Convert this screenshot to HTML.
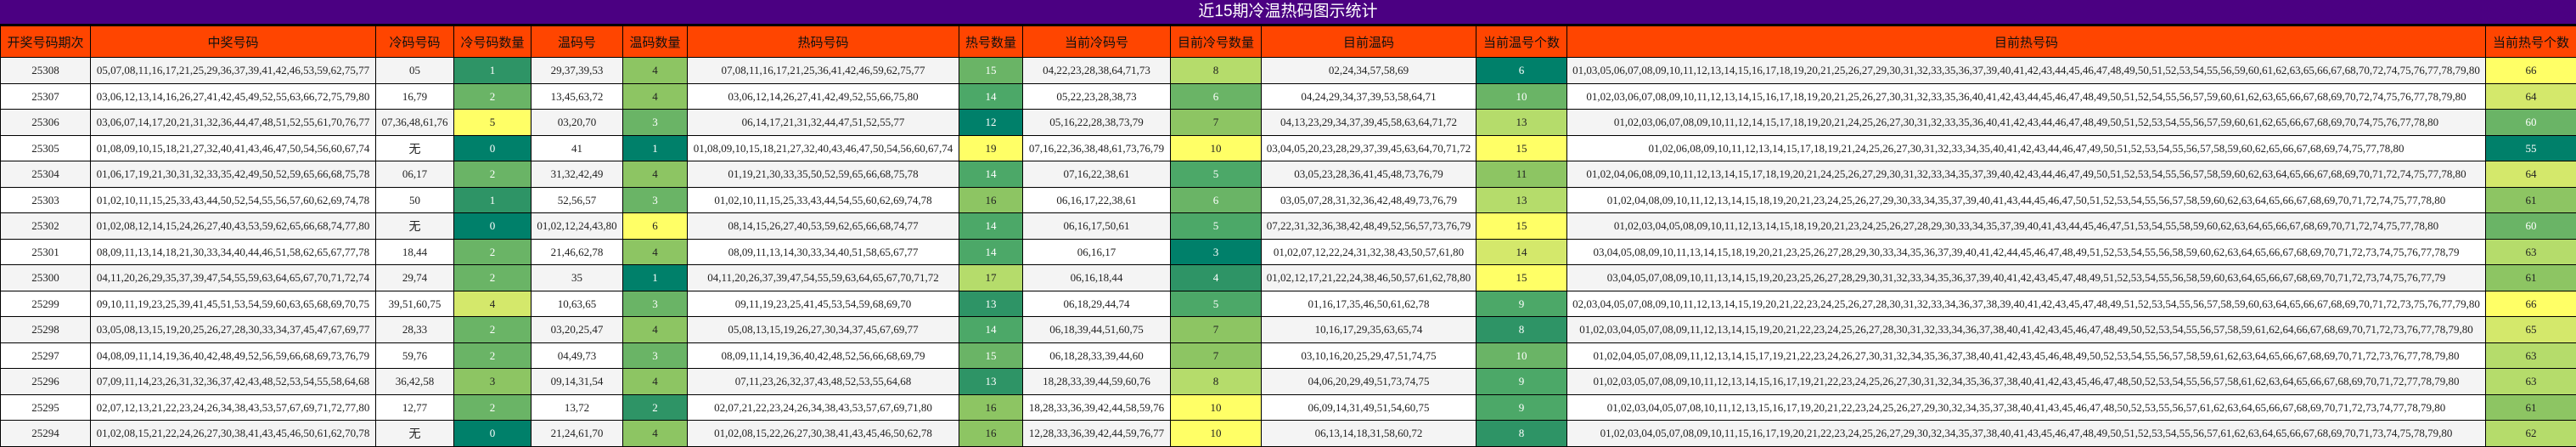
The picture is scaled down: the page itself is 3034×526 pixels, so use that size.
<!DOCTYPE html>
<html><head><meta charset="utf-8"><style>
html,body{margin:0;padding:0;background:#fff;width:3034px;height:526px;overflow:hidden}
.title{height:28px;background:#4B0082;color:#fff;text-align:center;font:19px/28px "Liberation Sans","Noto Sans CJK SC",sans-serif;border-bottom:2px solid #000;box-sizing:content-box}
table{border-collapse:collapse;table-layout:fixed;width:3034px}
td,th{border:1px solid #000;text-align:center;padding:0;overflow:hidden;white-space:nowrap;font:13px "Liberation Serif","Noto Serif CJK SC",serif;color:#222}
th{background:#FF4500;height:36px;font:15px "Liberation Sans","Noto Sans CJK SC",sans-serif;color:#111;font-weight:normal}
tr.r td{height:29px}
tr.s td{height:30px}
tr:nth-child(even) td{background:#F4F4F4}
tr:nth-child(odd) td{background:#fff}
tr td.g0{background:#00806A;color:#fff}
tr td.g1{background:#2E9466;color:#fff}
tr td.g2{background:#4CA868;color:#fff}
tr td.g3{background:#6AB466;color:#fff}
tr td.g4{background:#8DC563;color:#222}
tr td.g5{background:#B5DC6B;color:#222}
tr td.g6{background:#D4E86B;color:#222}
tr td.g7{background:#FFFF66;color:#222}
.cn{font-family:"Liberation Sans","Noto Sans CJK SC",sans-serif;font-size:14px}
</style></head><body>
<div class="title">近15期冷温热码图示统计</div>
<table>
<colgroup><col style="width:106px"><col style="width:336px"><col style="width:92px"><col style="width:91px"><col style="width:108px"><col style="width:76px"><col style="width:320px"><col style="width:75px"><col style="width:174px"><col style="width:107px"><col style="width:253px"><col style="width:107px"><col style="width:1082px"><col style="width:107px"></colgroup>
<tr><th>开奖号码期次</th><th>中奖号码</th><th>冷码号码</th><th>冷号码数量</th><th>温码号</th><th>温码数量</th><th>热码号码</th><th>热号数量</th><th>当前冷码号</th><th>目前冷号数量</th><th>目前温码</th><th>当前温号个数</th><th>目前热号码</th><th>当前热号个数</th></tr>
<tr class="s"><td>25308</td><td>05,07,08,11,16,17,21,25,29,36,37,39,41,42,46,53,59,62,75,77</td><td>05</td><td class="g1">1</td><td>29,37,39,53</td><td class="g4">4</td><td>07,08,11,16,17,21,25,36,41,42,46,59,62,75,77</td><td class="g3">15</td><td>04,22,23,28,38,64,71,73</td><td class="g5">8</td><td>02,24,34,57,58,69</td><td class="g0">6</td><td>01,03,05,06,07,08,09,10,11,12,13,14,15,16,17,18,19,20,21,25,26,27,29,30,31,32,33,35,36,37,39,40,41,42,43,44,45,46,47,48,49,50,51,52,53,54,55,56,59,60,61,62,63,65,66,67,68,70,72,74,75,76,77,78,79,80</td><td class="g7">66</td></tr>
<tr class="r"><td>25307</td><td>03,06,12,13,14,16,26,27,41,42,45,49,52,55,63,66,72,75,79,80</td><td>16,79</td><td class="g3">2</td><td>13,45,63,72</td><td class="g4">4</td><td>03,06,12,14,26,27,41,42,49,52,55,66,75,80</td><td class="g2">14</td><td>05,22,23,28,38,73</td><td class="g3">6</td><td>04,24,29,34,37,39,53,58,64,71</td><td class="g3">10</td><td>01,02,03,06,07,08,09,10,11,12,13,14,15,16,17,18,19,20,21,25,26,27,30,31,32,33,35,36,40,41,42,43,44,45,46,47,48,49,50,51,52,54,55,56,57,59,60,61,62,63,65,66,67,68,69,70,72,74,75,76,77,78,79,80</td><td class="g6">64</td></tr>
<tr class="s"><td>25306</td><td>03,06,07,14,17,20,21,31,32,36,44,47,48,51,52,55,61,70,76,77</td><td>07,36,48,61,76</td><td class="g7">5</td><td>03,20,70</td><td class="g3">3</td><td>06,14,17,21,31,32,44,47,51,52,55,77</td><td class="g0">12</td><td>05,16,22,28,38,73,79</td><td class="g4">7</td><td>04,13,23,29,34,37,39,45,58,63,64,71,72</td><td class="g5">13</td><td>01,02,03,06,07,08,09,10,11,12,14,15,17,18,19,20,21,24,25,26,27,30,31,32,33,35,36,40,41,42,43,44,46,47,48,49,50,51,52,53,54,55,56,57,59,60,61,62,65,66,67,68,69,70,74,75,76,77,78,80</td><td class="g3">60</td></tr>
<tr class="r"><td>25305</td><td>01,08,09,10,15,18,21,27,32,40,41,43,46,47,50,54,56,60,67,74</td><td class="cn">无</td><td class="g0">0</td><td>41</td><td class="g0">1</td><td>01,08,09,10,15,18,21,27,32,40,43,46,47,50,54,56,60,67,74</td><td class="g7">19</td><td>07,16,22,36,38,48,61,73,76,79</td><td class="g7">10</td><td>03,04,05,20,23,28,29,37,39,45,63,64,70,71,72</td><td class="g7">15</td><td>01,02,06,08,09,10,11,12,13,14,15,17,18,19,21,24,25,26,27,30,31,32,33,34,35,40,41,42,43,44,46,47,49,50,51,52,53,54,55,56,57,58,59,60,62,65,66,67,68,69,74,75,77,78,80</td><td class="g0">55</td></tr>
<tr class="s"><td>25304</td><td>01,06,17,19,21,30,31,32,33,35,42,49,50,52,59,65,66,68,75,78</td><td>06,17</td><td class="g3">2</td><td>31,32,42,49</td><td class="g4">4</td><td>01,19,21,30,33,35,50,52,59,65,66,68,75,78</td><td class="g2">14</td><td>07,16,22,38,61</td><td class="g2">5</td><td>03,05,23,28,36,41,45,48,73,76,79</td><td class="g4">11</td><td>01,02,04,06,08,09,10,11,12,13,14,15,17,18,19,20,21,24,25,26,27,29,30,31,32,33,34,35,37,39,40,42,43,44,46,47,49,50,51,52,53,54,55,56,57,58,59,60,62,63,64,65,66,67,68,69,70,71,72,74,75,77,78,80</td><td class="g6">64</td></tr>
<tr class="r"><td>25303</td><td>01,02,10,11,15,25,33,43,44,50,52,54,55,56,57,60,62,69,74,78</td><td>50</td><td class="g1">1</td><td>52,56,57</td><td class="g3">3</td><td>01,02,10,11,15,25,33,43,44,54,55,60,62,69,74,78</td><td class="g4">16</td><td>06,16,17,22,38,61</td><td class="g3">6</td><td>03,05,07,28,31,32,36,42,48,49,73,76,79</td><td class="g5">13</td><td>01,02,04,08,09,10,11,12,13,14,15,18,19,20,21,23,24,25,26,27,29,30,33,34,35,37,39,40,41,43,44,45,46,47,50,51,52,53,54,55,56,57,58,59,60,62,63,64,65,66,67,68,69,70,71,72,74,75,77,78,80</td><td class="g4">61</td></tr>
<tr class="s"><td>25302</td><td>01,02,08,12,14,15,24,26,27,40,43,53,59,62,65,66,68,74,77,80</td><td class="cn">无</td><td class="g0">0</td><td>01,02,12,24,43,80</td><td class="g7">6</td><td>08,14,15,26,27,40,53,59,62,65,66,68,74,77</td><td class="g2">14</td><td>06,16,17,50,61</td><td class="g2">5</td><td>07,22,31,32,36,38,42,48,49,52,56,57,73,76,79</td><td class="g7">15</td><td>01,02,03,04,05,08,09,10,11,12,13,14,15,18,19,20,21,23,24,25,26,27,28,29,30,33,34,35,37,39,40,41,43,44,45,46,47,51,53,54,55,58,59,60,62,63,64,65,66,67,68,69,70,71,72,74,75,77,78,80</td><td class="g3">60</td></tr>
<tr class="r"><td>25301</td><td>08,09,11,13,14,18,21,30,33,34,40,44,46,51,58,62,65,67,77,78</td><td>18,44</td><td class="g3">2</td><td>21,46,62,78</td><td class="g4">4</td><td>08,09,11,13,14,30,33,34,40,51,58,65,67,77</td><td class="g2">14</td><td>06,16,17</td><td class="g0">3</td><td>01,02,07,12,22,24,31,32,38,43,50,57,61,80</td><td class="g6">14</td><td>03,04,05,08,09,10,11,13,14,15,18,19,20,21,23,25,26,27,28,29,30,33,34,35,36,37,39,40,41,42,44,45,46,47,48,49,51,52,53,54,55,56,58,59,60,62,63,64,65,66,67,68,69,70,71,72,73,74,75,76,77,78,79</td><td class="g5">63</td></tr>
<tr class="s"><td>25300</td><td>04,11,20,26,29,35,37,39,47,54,55,59,63,64,65,67,70,71,72,74</td><td>29,74</td><td class="g3">2</td><td>35</td><td class="g0">1</td><td>04,11,20,26,37,39,47,54,55,59,63,64,65,67,70,71,72</td><td class="g5">17</td><td>06,16,18,44</td><td class="g1">4</td><td>01,02,12,17,21,22,24,38,46,50,57,61,62,78,80</td><td class="g7">15</td><td>03,04,05,07,08,09,10,11,13,14,15,19,20,23,25,26,27,28,29,30,31,32,33,34,35,36,37,39,40,41,42,43,45,47,48,49,51,52,53,54,55,56,58,59,60,63,64,65,66,67,68,69,70,71,72,73,74,75,76,77,79</td><td class="g4">61</td></tr>
<tr class="r"><td>25299</td><td>09,10,11,19,23,25,39,41,45,51,53,54,59,60,63,65,68,69,70,75</td><td>39,51,60,75</td><td class="g6">4</td><td>10,63,65</td><td class="g3">3</td><td>09,11,19,23,25,41,45,53,54,59,68,69,70</td><td class="g1">13</td><td>06,18,29,44,74</td><td class="g2">5</td><td>01,16,17,35,46,50,61,62,78</td><td class="g2">9</td><td>02,03,04,05,07,08,09,10,11,12,13,14,15,19,20,21,22,23,24,25,26,27,28,30,31,32,33,34,36,37,38,39,40,41,42,43,45,47,48,49,51,52,53,54,55,56,57,58,59,60,63,64,65,66,67,68,69,70,71,72,73,75,76,77,79,80</td><td class="g7">66</td></tr>
<tr class="s"><td>25298</td><td>03,05,08,13,15,19,20,25,26,27,28,30,33,34,37,45,47,67,69,77</td><td>28,33</td><td class="g3">2</td><td>03,20,25,47</td><td class="g4">4</td><td>05,08,13,15,19,26,27,30,34,37,45,67,69,77</td><td class="g2">14</td><td>06,18,39,44,51,60,75</td><td class="g4">7</td><td>10,16,17,29,35,63,65,74</td><td class="g1">8</td><td>01,02,03,04,05,07,08,09,11,12,13,14,15,19,20,21,22,23,24,25,26,27,28,30,31,32,33,34,36,37,38,40,41,42,43,45,46,47,48,49,50,52,53,54,55,56,57,58,59,61,62,64,66,67,68,69,70,71,72,73,76,77,78,79,80</td><td class="g6">65</td></tr>
<tr class="r"><td>25297</td><td>04,08,09,11,14,19,36,40,42,48,49,52,56,59,66,68,69,73,76,79</td><td>59,76</td><td class="g3">2</td><td>04,49,73</td><td class="g3">3</td><td>08,09,11,14,19,36,40,42,48,52,56,66,68,69,79</td><td class="g3">15</td><td>06,18,28,33,39,44,60</td><td class="g4">7</td><td>03,10,16,20,25,29,47,51,74,75</td><td class="g3">10</td><td>01,02,04,05,07,08,09,11,12,13,14,15,17,19,21,22,23,24,26,27,30,31,32,34,35,36,37,38,40,41,42,43,45,46,48,49,50,52,53,54,55,56,57,58,59,61,62,63,64,65,66,67,68,69,70,71,72,73,76,77,78,79,80</td><td class="g5">63</td></tr>
<tr class="s"><td>25296</td><td>07,09,11,14,23,26,31,32,36,37,42,43,48,52,53,54,55,58,64,68</td><td>36,42,58</td><td class="g4">3</td><td>09,14,31,54</td><td class="g4">4</td><td>07,11,23,26,32,37,43,48,52,53,55,64,68</td><td class="g1">13</td><td>18,28,33,39,44,59,60,76</td><td class="g5">8</td><td>04,06,20,29,49,51,73,74,75</td><td class="g2">9</td><td>01,02,03,05,07,08,09,10,11,12,13,14,15,16,17,19,21,22,23,24,25,26,27,30,31,32,34,35,36,37,38,40,41,42,43,45,46,47,48,50,52,53,54,55,56,57,58,61,62,63,64,65,66,67,68,69,70,71,72,77,78,79,80</td><td class="g5">63</td></tr>
<tr class="r"><td>25295</td><td>02,07,12,13,21,22,23,24,26,34,38,43,53,57,67,69,71,72,77,80</td><td>12,77</td><td class="g3">2</td><td>13,72</td><td class="g1">2</td><td>02,07,21,22,23,24,26,34,38,43,53,57,67,69,71,80</td><td class="g4">16</td><td>18,28,33,36,39,42,44,58,59,76</td><td class="g7">10</td><td>06,09,14,31,49,51,54,60,75</td><td class="g2">9</td><td>01,02,03,04,05,07,08,10,11,12,13,15,16,17,19,20,21,22,23,24,25,26,27,29,30,32,34,35,37,38,40,41,43,45,46,47,48,50,52,53,55,56,57,61,62,63,64,65,66,67,68,69,70,71,72,73,74,77,78,79,80</td><td class="g4">61</td></tr>
<tr class="s"><td>25294</td><td>01,02,08,15,21,22,24,26,27,30,38,41,43,45,46,50,61,62,70,78</td><td class="cn">无</td><td class="g0">0</td><td>21,24,61,70</td><td class="g4">4</td><td>01,02,08,15,22,26,27,30,38,41,43,45,46,50,62,78</td><td class="g4">16</td><td>12,28,33,36,39,42,44,59,76,77</td><td class="g7">10</td><td>06,13,14,18,31,58,60,72</td><td class="g1">8</td><td>01,02,03,04,05,07,08,09,10,11,15,16,17,19,20,21,22,23,24,25,26,27,29,30,32,34,35,37,38,40,41,43,45,46,47,48,49,50,51,52,53,54,55,56,57,61,62,63,64,65,66,67,68,69,70,71,73,74,75,78,79,80</td><td class="g5">62</td></tr>
</table>
</body></html>
